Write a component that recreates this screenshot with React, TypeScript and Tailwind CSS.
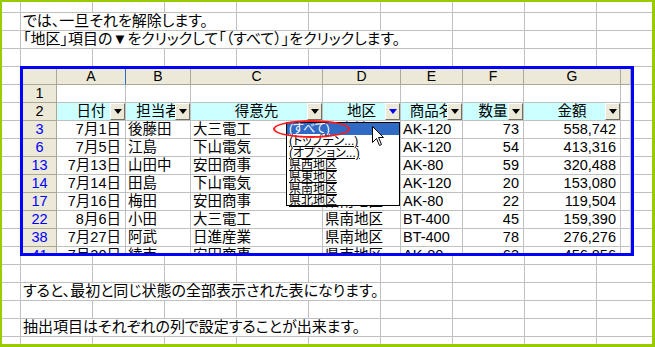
import React from "react";

const FONT = "font-['Liberation_Sans','Noto_Sans_CJK_JP',sans-serif] [font-feature-settings:'palt']";

const W = ["w-[34px]", "w-[69px]", "w-[65px]", "w-[132px]", "w-[78px]", "w-[62px]", "w-[61px]", "w-[97px]"];

function FilterBtn({ active = false }: { active?: boolean }) {
  return (
    <div className="absolute right-0 top-0 w-[15px] h-[17px] bg-[#ece9d8] border border-t-white border-l-white border-r-[#716f64] border-b-[#716f64] flex items-center justify-center">
      <div
        className={
          "w-0 h-0 border-l-[4px] border-r-[4px] border-t-[5px] border-l-transparent border-r-transparent " +
          (active ? "border-t-[#0000ff]" : "border-t-black")
        }
      />
    </div>
  );
}

const colHeads = ["A", "B", "C", "D", "E", "F", "G"];
const heads2 = ["日付", "担当者", "得意先", "地区", "商品名", "数量", "金額"];

type Row = [string, string, string, string, string, string, string, string];
const rows: Row[] = [
  ["3", "7月1日", "後藤田", "大三電工", "県東地区", "AK-120", "73", "558,742"],
  ["6", "7月5日", "江島", "下山電気", "県西地区", "AK-120", "54", "413,316"],
  ["13", "7月13日", "山田中", "安田商事", "県北地区", "AK-80", "59", "320,488"],
  ["14", "7月14日", "田島", "下山電気", "県西地区", "AK-120", "20", "153,080"],
  ["17", "7月16日", "梅田", "安田商事", "県南地区", "AK-80", "22", "119,504"],
  ["22", "8月6日", "小田", "大三電工", "県南地区", "BT-400", "45", "159,390"],
  ["38", "7月27日", "阿武", "日進産業", "県南地区", "BT-400", "78", "276,276"],
  ["41", "7月30日", "綾南", "安田商事", "県南地区", "AK-80", "63", "456,856"],
];

const cell = "box-border border-r border-b border-[#c0c0c0] h-full overflow-hidden whitespace-nowrap relative";
const hcell = "box-border border-r border-b border-[#aca899] h-full flex items-center justify-center bg-[#ece9d8]";

function ExcelPic() {
  return (
    <div className="relative w-[614px] h-[190px] box-border border-[3px] border-[#0000ff] bg-white overflow-hidden text-[14.5px] leading-[17px] text-black">
      <div className="flex flex-col h-full">
        <div className="flex h-[16px] shrink-0">
          <div className={`${hcell} ${W[0]}`} />
          {colHeads.map((c, i) => (
            <div
              key={c}
              className={`${hcell} ${W[i + 1]} ${i === 0 ? "bg-[#c1d2ee] border-r-[#316ac5]" : ""} text-[14px]`}
            >
              {c}
            </div>
          ))}
          <div className={`${hcell} flex-1`} />
        </div>
        <div className="flex h-[18px] shrink-0">
          <div className={`${hcell} ${W[0]}`}>1</div>
          {W.slice(1).map((w, i) => (
            <div key={i} className={`${cell} ${w}`} />
          ))}
          <div className={`${cell} flex-1`} />
        </div>
        <div className="flex h-[18px] shrink-0">
          <div className={`${hcell} ${W[0]}`}>2</div>
          {heads2.map((h, i) => (
            <div key={h} className={`${cell} ${W[i + 1]} bg-[#ccffff] flex items-center justify-center`}>
              <span>{h}</span>
              <FilterBtn active={i === 3} />
            </div>
          ))}
          <div className={`${cell} flex-1`} />
        </div>
        {rows.map((r) => (
          <div key={r[0]} className="flex h-[18px] shrink-0">
            <div className={`${hcell} ${W[0]} text-[#0000ff]`}>{r[0]}</div>
            <div className={`${cell} ${W[1]} text-right pr-[4px] flex items-center justify-end`}>{r[1]}</div>
            <div className={`${cell} ${W[2]} pl-[2px] flex items-center`}>{r[2]}</div>
            <div className={`${cell} ${W[3]} pl-[2px] flex items-center`}>{r[3]}</div>
            <div className={`${cell} ${W[4]} pl-[2px] flex items-center`}>{r[4]}</div>
            <div className={`${cell} ${W[5]} pl-[2px] flex items-center`}>{r[5]}</div>
            <div className={`${cell} ${W[6]} pr-[4px] flex items-center justify-end`}>{r[6]}</div>
            <div className={`${cell} ${W[7]} pr-[4px] flex items-center justify-end`}>{r[7]}</div>
            <div className={`${cell} flex-1`} />
          </div>
        ))}
      </div>

      <div className="absolute left-[263px] top-[53px] w-[114px] h-[84px] bg-white border border-black box-border flex flex-col text-[12px] leading-[12px]">
        {["(すべて)", "(トップテン...)", "(オプション...)", "県西地区", "県東地区", "県南地区", "県北地区"].map((t, i) => (
          <div
            key={t}
            className={`h-[12px] shrink-0 pl-[2px] underline whitespace-nowrap ${i === 0 ? "bg-[#316ac5] text-white" : ""}`}
          >
            {t}
          </div>
        ))}
      </div>

      <div className="absolute left-[250px] top-[51px] w-[77px] h-[18px] rounded-[50%] border-2 border-[#ff1a1a]" />

      <svg className="absolute left-[349px] top-[57px]" width="13" height="21" viewBox="0 0 13 21">
        <path d="M0.5 0.5 V16.5 L4.5 12.5 L7.5 19.5 L9.5 18.5 L6.5 11.5 H11.5 Z" fill="white" stroke="black" strokeWidth="1" />
      </svg>
    </div>
  );
}

function TextRow({ text, w }: { text: string; w: string }) {
  return (
    <div className="h-[18px] shrink-0 pl-[19px]">
      <div className={`mt-[1px] h-[17px] bg-white ${w} pl-[2px] flex items-center whitespace-nowrap text-[15px]`}>
        {text}
      </div>
    </div>
  );
}

export default function App() {
  return (
    <div
      className={`w-[655px] h-[347px] box-border border-l-2 border-t-2 border-r-[3px] border-b-[3px] border-[#99cc00] bg-white overflow-hidden ${FONT} text-black bg-[repeating-linear-gradient(to_right,transparent_0_18px,#c0c0c0_18px_19px,transparent_19px_72px),repeating-linear-gradient(to_bottom,transparent_0_10px,#c0c0c0_10px_11px,transparent_11px_18px)]`}
    >
      <div className="flex flex-col">
        <div className="h-[10px] shrink-0" />
        <TextRow text="では、一旦それを解除します。" w="w-[215px]" />
        <TextRow text="「地区」項目の▼をクリックして「（すべて）」をクリックします。" w="w-[431px]" />
        <div className="h-[18px] shrink-0" />
        <div className="pl-[18px] shrink-0">
          <ExcelPic />
        </div>
        <div className="h-[26px] shrink-0" />
        <TextRow text="すると、最初と同じ状態の全部表示された表になります。" w="w-[359px]" />
        <div className="h-[18px] shrink-0" />
        <TextRow text="抽出項目はそれぞれの列で設定することが出来ます。" w="w-[359px]" />
      </div>
    </div>
  );
}
